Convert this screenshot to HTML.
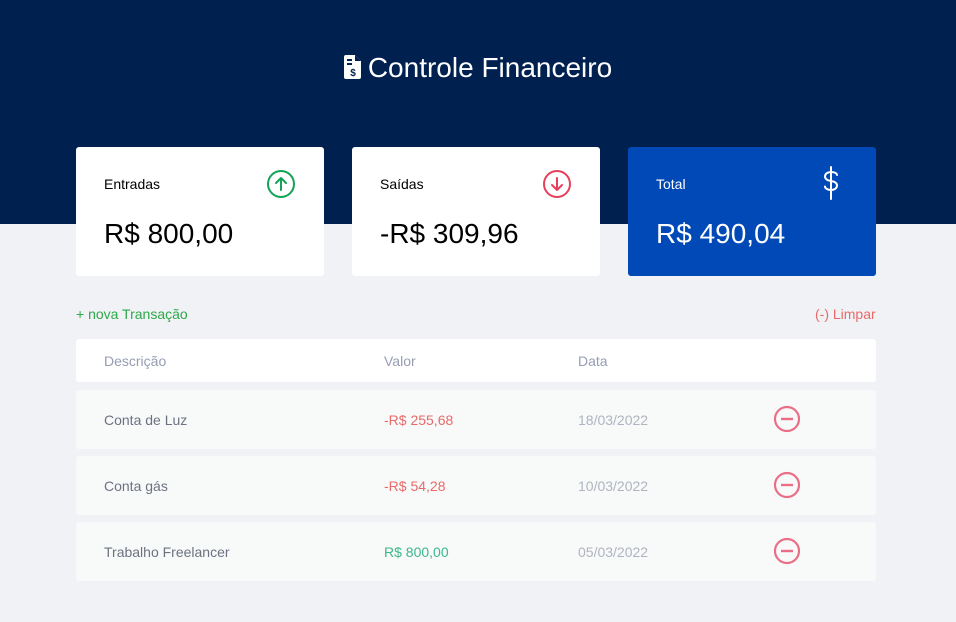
<!DOCTYPE html>
<html><head><meta charset="utf-8"><style>
*{margin:0;padding:0;box-sizing:border-box}
body{width:956px;height:622px;background:#f0f2f5;font-family:"Liberation Sans",sans-serif;position:relative;overflow:hidden}
.hdr{position:absolute;left:0;top:0;width:956px;height:224px;background:#002050}
.title{position:absolute;top:50px;left:0;width:956px;text-align:center;color:#fff;font-size:28px;line-height:36px}
.card{position:absolute;top:147px;width:248px;height:129px;background:#fff;border-radius:3px}
.card .lb{position:absolute;left:28px;top:29px;font-size:14px;color:#000}
.card .v{position:absolute;left:28px;top:71px;font-size:28px;color:#000}
.card svg{position:absolute;right:28px;top:22px}
.t{position:absolute;font-size:14px}
.row{position:absolute;left:76px;width:800px;height:59px;background:#f8f9f9;border-radius:3px}
.row span{position:absolute;top:22px;font-size:14px}
.row svg{position:absolute;left:697px;top:15px}
</style></head><body>
<div class="hdr"></div>
<div class="title"><svg width="18" height="24" viewBox="0 0 18 24" style="vertical-align:-2px;margin-right:6px"><path d="M2 0h9l6 6v16a2 2 0 0 1-2 2H2a2 2 0 0 1-2-2V2a2 2 0 0 1 2-2z" fill="#fff"/><path d="M11 0v6h6" fill="#002050"/><rect x="3" y="4" width="5" height="2" fill="#002050"/><rect x="3" y="8" width="5" height="2" fill="#002050"/><text x="9" y="21" font-size="10" font-weight="bold" text-anchor="middle" fill="#002050" font-family="Liberation Sans">$</text></svg>Controle Financeiro</div>
<div class="card" style="left:76px"><div class="lb">Entradas</div><div class="v">R$ 800,00</div><svg width="30" height="30" viewBox="0 0 30 30"><circle cx="15" cy="15" r="13" fill="none" stroke="#12a454" stroke-width="2"/><path d="M15 21V9M10 14l5-5 5 5" fill="none" stroke="#12a454" stroke-width="2" stroke-linecap="round" stroke-linejoin="round"/></svg></div>
<div class="card" style="left:352px"><div class="lb">Saídas</div><div class="v">-R$ 309,96</div><svg width="30" height="30" viewBox="0 0 30 30"><circle cx="15" cy="15" r="13" fill="none" stroke="#e83f5b" stroke-width="2"/><path d="M15 9v12M10 16l5 5 5-5" fill="none" stroke="#e83f5b" stroke-width="2" stroke-linecap="round" stroke-linejoin="round"/></svg></div>
<div class="card" style="left:628px;background:#0049b6"><div class="lb" style="color:#fff">Total</div><div class="v" style="color:#fff">R$ 490,04</div><svg width="30" height="36" viewBox="0 0 30 34" style="top:18px;right:30px"><path d="M15 1v32M21 9c0-2-3-3-6-3s-6 1.5-6 4.5 3 4 6 4.5 6 1.5 6 4.5-3 4.5-6 4.5-6-1.5-6-3.5" fill="none" stroke="#fff" stroke-width="2" stroke-linecap="round"/></svg></div>
<div class="t" style="left:76px;top:306px;color:#2ea84a">+ nova Transação</div>
<div class="t" style="left:815px;top:306px;color:#e96a6a">(-) Limpar</div>
<div class="row" style="top:339px;height:43px;background:#fff"><span style="left:28px;top:14px;color:#969cb3">Descrição</span><span style="left:308px;top:14px;color:#969cb3">Valor</span><span style="left:502px;top:14px;color:#969cb3">Data</span></div>
<div class="row" style="top:390px"><span style="left:28px;color:#6c7281">Conta de Luz</span><span style="left:308px;color:#e86a6a">-R$ 255,68</span><span style="left:502px;color:#b0b4c0">18/03/2022</span><svg width="28" height="28" viewBox="0 0 28 28"><circle cx="14" cy="14" r="12" fill="none" stroke="#ea6f86" stroke-width="2.2"/><path d="M8 14h12" stroke="#ea6f86" stroke-width="2.4"/></svg></div>
<div class="row" style="top:456px"><span style="left:28px;color:#6c7281">Conta gás</span><span style="left:308px;color:#e86a6a">-R$ 54,28</span><span style="left:502px;color:#b0b4c0">10/03/2022</span><svg width="28" height="28" viewBox="0 0 28 28"><circle cx="14" cy="14" r="12" fill="none" stroke="#ea6f86" stroke-width="2.2"/><path d="M8 14h12" stroke="#ea6f86" stroke-width="2.4"/></svg></div>
<div class="row" style="top:522px"><span style="left:28px;color:#6c7281">Trabalho Freelancer</span><span style="left:308px;color:#3cb88a">R$ 800,00</span><span style="left:502px;color:#b0b4c0">05/03/2022</span><svg width="28" height="28" viewBox="0 0 28 28"><circle cx="14" cy="14" r="12" fill="none" stroke="#ea6f86" stroke-width="2.2"/><path d="M8 14h12" stroke="#ea6f86" stroke-width="2.4"/></svg></div>
</body></html>
